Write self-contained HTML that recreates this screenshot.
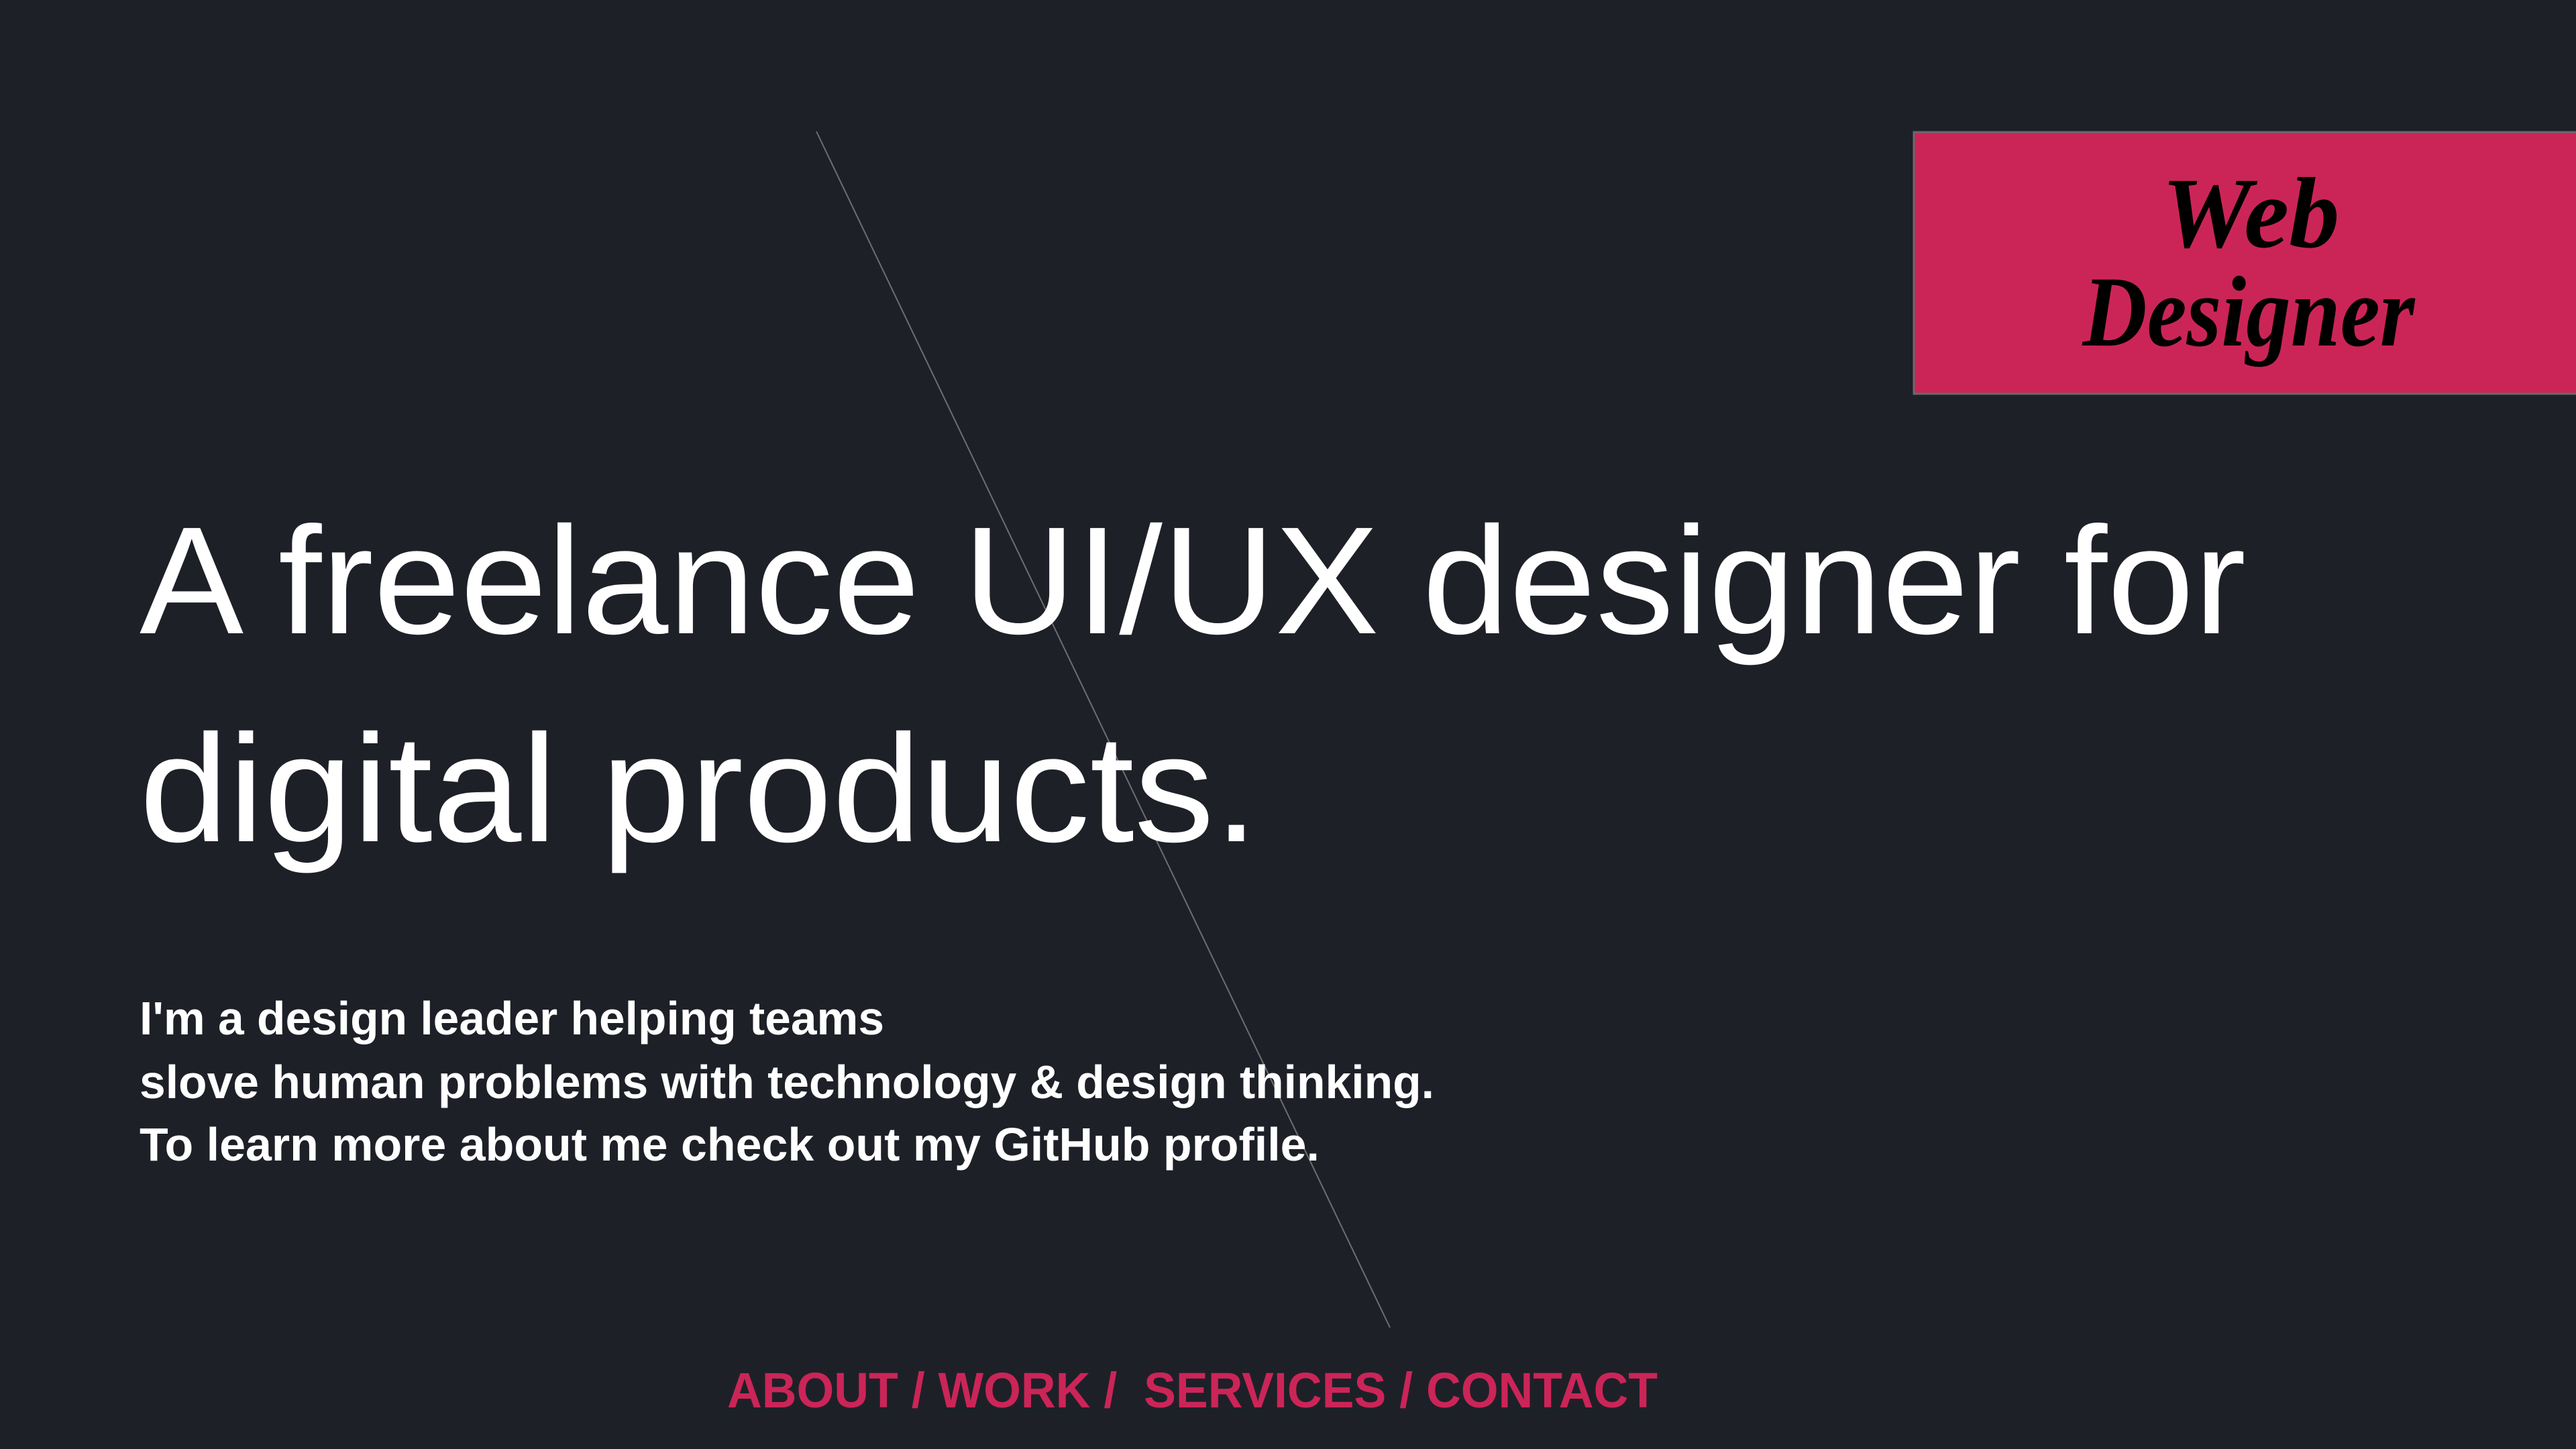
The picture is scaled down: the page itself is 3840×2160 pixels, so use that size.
<!DOCTYPE html>
<html><head><meta charset="utf-8"><style>
html,body{margin:0;padding:0;background:#1e2028;width:3840px;height:2160px;overflow:hidden}
svg{display:block}
</style></head><body>
<svg width="3840" height="2160" viewBox="0 0 3840 2160" xmlns="http://www.w3.org/2000/svg">
<rect width="3840" height="2160" fill="#1e2028"/>
<rect x="2853" y="197" width="990" height="390" fill="#cb2558" stroke="#6a6a6a" stroke-width="3"/>
<text x="3355" y="368" text-anchor="middle" font-family="Liberation Serif, serif" font-style="italic" font-weight="bold" font-size="150" fill="#000" textLength="265" lengthAdjust="spacingAndGlyphs">Web</text>
<text x="3352" y="515" text-anchor="middle" font-family="Liberation Serif, serif" font-style="italic" font-weight="bold" font-size="150" fill="#000" textLength="495" lengthAdjust="spacingAndGlyphs">Designer</text>
<line x1="1217" y1="196" x2="2072" y2="1979" stroke="#6e6e6e" stroke-width="2"/>
<g font-family="Liberation Sans, sans-serif" fill="#fff">
<text x="208" y="944" font-size="228" textLength="3140" lengthAdjust="spacingAndGlyphs">A freelance UI/UX designer for</text>
<text x="208" y="1254" font-size="228" textLength="1668" lengthAdjust="spacingAndGlyphs">digital products.</text>
<g font-weight="bold" font-size="70">
<text x="208" y="1542" textLength="1110" lengthAdjust="spacingAndGlyphs">I'm a design leader helping teams</text>
<text x="208" y="1637" textLength="1930" lengthAdjust="spacingAndGlyphs">slove human problems with technology &amp; design thinking.</text>
<text x="208" y="1730" textLength="1759" lengthAdjust="spacingAndGlyphs">To learn more about me check out my GitHub profile.</text>
</g>
<text x="1084" y="2098" font-weight="bold" font-size="74" fill="#cb2558" textLength="1387" lengthAdjust="spacingAndGlyphs" xml:space="preserve">ABOUT / WORK /  SERVICES / CONTACT</text>
</g>
</svg>
</body></html>
